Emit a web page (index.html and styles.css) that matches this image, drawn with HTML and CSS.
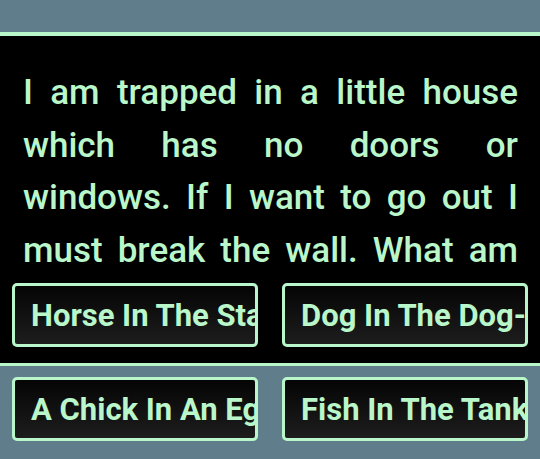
FILE: index.html
```html
<!DOCTYPE html>
<html>
<head>
<meta charset="utf-8">
<link rel="stylesheet" href="styles.css">
</head>
<body>
<div class="top-spacer"></div>
<section class="quiz">
  <div class="question">
    <p class="question-text">I am trapped in a little house which has no doors or windows. If I want to go out I must break the wall. What am I?</p>
  </div>
  <div class="answers">
    <button class="answer"><span class="label">Horse In The Stable</span></button>
    <button class="answer"><span class="label">Dog In The Dog-house</span></button>
  </div>
</section>
<section class="lower">
  <div class="answers">
    <button class="answer"><span class="label">A Chick In An Egg</span></button>
    <button class="answer"><span class="label">Fish In The Tank</span></button>
  </div>
</section>
</body>
</html>
```
FILE: styles.css
```css
html, body {
  margin: 0;
  padding: 0;
}
body {
  width: 540px;
  height: 459px;
  overflow: hidden;
  background: #607d8b;
  font-family: Roboto, "Noto Sans", sans-serif;
}
.top-spacer {
  height: 32px;
}
.quiz {
  background: #000;
  border-top: 4px solid #b9f6ca;
  border-bottom: 3px solid #b9f6ca;
}
.question {
  height: 247px;
  box-sizing: border-box;
  padding: 31px 22px 0 23px;
  overflow: hidden;
}
.question-text {
  margin: 0;
  color: #b9f6ca;
  font-size: 35px;
  font-weight: 500;
  line-height: 52.5px;
  text-align: justify;
}
.answers {
  display: grid;
  grid-template-columns: 1fr 1fr;
  column-gap: 24px;
  padding: 0 12px;
}
.quiz .answers {
  padding-bottom: 16px;
}
.lower .answers {
  padding-top: 11px;
}
.answer {
  height: 64px;
  margin: 0;
  padding: 0 0 0 16px;
  border: 3px solid #b9f6ca;
  border-radius: 5px;
  background: linear-gradient(#050505, #1d1d1d);
  color: #b9f6ca;
  font-family: Roboto, "Noto Sans", sans-serif;
  font-size: 31px;
  font-weight: 700;
  text-align: left;
  overflow: hidden;
  white-space: nowrap;
  display: flex;
  align-items: center;
}
.label {
  display: block;
  white-space: nowrap;
}
```
